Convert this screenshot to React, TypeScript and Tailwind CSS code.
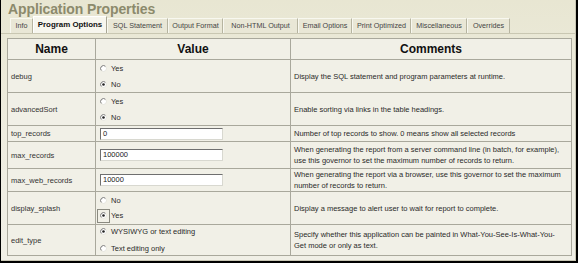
import React from "react";

const font = { fontFamily: '"Liberation Sans", Arial, sans-serif' };

function Radio({ checked }: { checked?: boolean }) {
  return (
    <svg width="7" height="7" viewBox="0 0 12 12" className="shrink-0">
      <circle cx="6" cy="6" r="5" fill="#ffffff" />
      <path d="M2.46 9.54 A5 5 0 0 1 9.54 2.46" fill="none" stroke="#6a6a6a" strokeWidth="1.6" />
      <path d="M9.54 2.46 A5 5 0 0 1 2.46 9.54" fill="none" stroke="#dcdcd4" strokeWidth="1.2" />
      {checked && <circle cx="6" cy="6" r="2.2" fill="#222" />}
    </svg>
  );
}

function RadioOpt({ label, checked, focus }: { label: string; checked?: boolean; focus?: boolean }) {
  return (
    <div className="flex items-center h-[13px]">
      <div className={focus ? "flex items-center justify-center w-[13px] h-[14px] -ml-[3px] mr-[1px] border border-[#8a8a80]" : "flex items-center w-[7px] mr-[4px]"}>
        <Radio checked={checked} />
      </div>
      <span className="text-[7.5px] text-[#2a2a2a]">{label}</span>
    </div>
  );
}

function Input({ value }: { value: string }) {
  return (
    <div className="w-[123px] h-[12px] bg-white border-t border-l border-[#6f6f6f] border-b border-r border-b-[#d8d8d0] border-r-[#d8d8d0] flex items-center pl-[2px]">
      <span className="text-[7.5px] text-[#222] leading-none">{value}</span>
    </div>
  );
}

type Row = {
  name: string;
  h: string;
  value: React.ReactNode;
  comment: string;
};

const rows: Row[] = [
  {
    name: "debug",
    h: "h-[33px]",
    value: (
      <div className="flex flex-col gap-[3px]">
        <RadioOpt label="Yes" />
        <RadioOpt label="No" checked />
      </div>
    ),
    comment: "Display the SQL statement and program parameters at runtime.",
  },
  {
    name: "advancedSort",
    h: "h-[33px]",
    value: (
      <div className="flex flex-col gap-[3px]">
        <RadioOpt label="Yes" />
        <RadioOpt label="No" checked />
      </div>
    ),
    comment: "Enable sorting via links in the table headings.",
  },
  {
    name: "top_records",
    h: "h-[16px]",
    value: <Input value="0" />,
    comment: "Number of top records to show. 0 means show all selected records",
  },
  {
    name: "max_records",
    h: "h-[27px]",
    value: <Input value="100000" />,
    comment:
      "When generating the report from a server command line (in batch, for example), use this governor to set the maximum number of records to return.",
  },
  {
    name: "max_web_records",
    h: "h-[23px]",
    value: <Input value="10000" />,
    comment:
      "When generating the report via a browser, use this governor to set the maximum number of records to return.",
  },
  {
    name: "display_splash",
    h: "h-[33px]",
    value: (
      <div className="flex flex-col gap-[2px]">
        <RadioOpt label="No" />
        <RadioOpt label="Yes" checked focus />
      </div>
    ),
    comment: "Display a message to alert user to wait for report to complete.",
  },
  {
    name: "edit_type",
    h: "h-[31px]",
    value: (
      <div className="flex flex-col gap-[4px]">
        <RadioOpt label="WYSIWYG or text editing" checked />
        <RadioOpt label="Text editing only" />
      </div>
    ),
    comment:
      "Specify whether this application can be painted in What-You-See-Is-What-You-Get mode or only as text.",
  },
];

const tabs = [
  { label: "Info", w: "w-[23px]" },
  { label: "Program Options", w: "w-[74px]", active: true },
  { label: "SQL Statement", w: "w-[61px]" },
  { label: "Output Format", w: "w-[55px]" },
  { label: "Non-HTML Output", w: "w-[75px]" },
  { label: "Email Options", w: "w-[54px]" },
  { label: "Print Optimized", w: "w-[59px]" },
  { label: "Miscellaneous", w: "w-[56px]" },
  { label: "Overrides", w: "w-[43px]" },
];

export default function App() {
  return (
    <div className="w-[578px] h-[263px] bg-black pl-[1px] pr-[2px] pb-[2px]" style={font}>
      <div className="w-full h-full bg-gradient-to-b from-[#e8e6d2] via-[#eeede0] to-[#f0efe6] border-r border-b border-[#c8c6b4] flex flex-col overflow-hidden">
        <div className="h-[17px] pl-[7px] flex items-center">
          <span className="text-[14px] font-bold text-[#8c8a6c] leading-none tracking-[-0.1px]">Application Properties</span>
        </div>
        <div className="flex items-end h-[17px] pl-[9px] border-b border-[#c9c7b2]">
          {tabs.map((t) => (
            <div
              key={t.label}
              className={
                t.active
                  ? `${t.w} h-[17px] flex items-center justify-center bg-[#f7f6ee] border-l border-t border-white border-r border-r-[#a8a694]`
                  : `${t.w} h-[15px] flex items-center justify-center bg-[#e9e7d6] border-l border-t border-[#f8f8f0] border-r border-r-[#b6b4a0]`
              }
            >
              <span
                className={
                  t.active
                    ? "text-[7.9px] font-bold text-[#111] whitespace-nowrap leading-none"
                    : "text-[7.2px] text-[#444] whitespace-nowrap leading-none"
                }
              >
                {t.label}
              </span>
            </div>
          ))}
        </div>
        <div className="pl-[6px] pt-[4px]">
          <table className="w-[564px] border-collapse border border-[#8d8c84] bg-[#f1f0e7] table-fixed text-[7.5px] leading-[11px]">
            <colgroup>
              <col className="w-[88px]" />
              <col className="w-[195px]" />
              <col className="w-[281px]" />
            </colgroup>
            <thead>
              <tr className="h-[21px]">
                <th className="border border-[#a9a89c] text-[12px] leading-[14px] font-bold text-[#111] text-center p-0">Name</th>
                <th className="border border-[#a9a89c] text-[12px] leading-[14px] font-bold text-[#111] text-center p-0">Value</th>
                <th className="border border-[#a9a89c] text-[12px] leading-[14px] font-bold text-[#111] text-center p-0">Comments</th>
              </tr>
            </thead>
            <tbody>
              {rows.map((r) => (
                <tr key={r.name} className={r.h}>
                  <td className="border border-[#a9a89c] align-middle pl-[3px] pr-0 py-0 text-[#333]">
                    {r.name}
                  </td>
                  <td className="border border-[#a9a89c] align-middle pl-[4px] py-0">{r.value}</td>
                  <td className="border border-[#a9a89c] align-middle pl-[3px] pr-[8px] py-0 text-[#2a2a2a]">
                    {r.comment}
                  </td>
                </tr>
              ))}
            </tbody>
          </table>
        </div>
      </div>
    </div>
  );
}
